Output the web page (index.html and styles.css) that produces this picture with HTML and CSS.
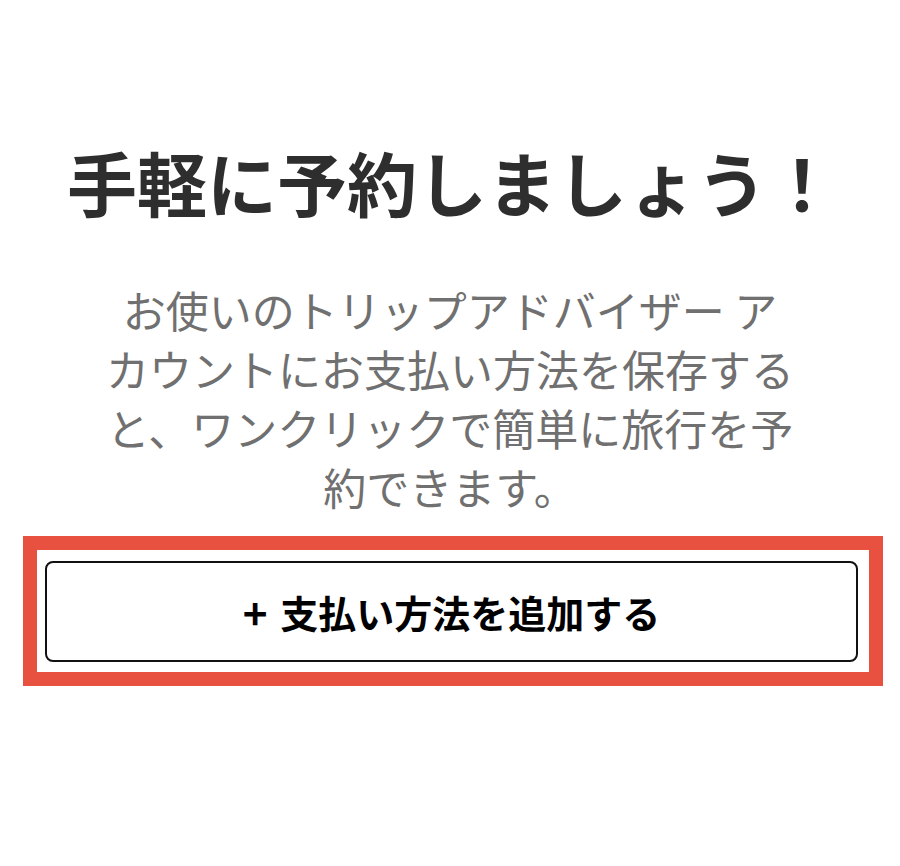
FILE: index.html
```html
<!DOCTYPE html>
<html lang="ja">
<head>
<meta charset="utf-8">
<title>手軽に予約しましょう！</title>
<link rel="stylesheet" href="styles.css">
</head>
<body>
<main class="page">
  <h1 class="title">手軽に予約しましょう！</h1>
  <p class="lead">お使いのトリップアドバイザー ア<br>カウントにお支払い方法を保存する<br>と、ワンクリックで簡単に旅行を予<br>約できます。</p>
  <div class="highlight">
    <button class="add-btn" type="button"><span class="plus">+</span> 支払い方法を追加する</button>
  </div>
</main>
</body>
</html>
```
FILE: styles.css
```css
html, body {
  margin: 0;
  padding: 0;
  background: #ffffff;
}
.page {
  width: 900px;
  height: 866px;
  display: flex;
  flex-direction: column;
  align-items: center;
  font-family: "Noto Sans CJK JP", "Noto Sans", sans-serif;
}
.title {
  margin: 140px 0 0 0;
  padding-left: 4px;
  font-size: 70px;
  line-height: 84px;
  font-weight: 700;
  color: #2e2e2e;
  text-align: center;
  white-space: nowrap;
}
.lead {
  margin: 56px 0 0 0;
  font-size: 43px;
  line-height: 59px;
  font-weight: 400;
  color: #707070;
  text-align: center;
  white-space: nowrap;
}
.highlight {
  align-self: flex-start;
  margin: 20px 0 0 23px;
  width: 860px;
  box-sizing: border-box;
  border: 14px solid #e8503f;
  padding: 11px 11px 10px 8px;
  background: #ffffff;
}
.add-btn {
  display: flex;
  align-items: center;
  justify-content: center;
  white-space: pre;
  width: 100%;
  height: 101px;
  box-sizing: border-box;
  border: 2px solid #111111;
  border-radius: 8px;
  background: #ffffff;
  font-family: "Noto Sans CJK JP", "Noto Sans", sans-serif;
  font-size: 38px;
  font-weight: 700;
  color: #000000;
  padding: 0;
  cursor: pointer;
}
.plus {
  font-size: 42px;
  margin-right: 4px;
}
```
